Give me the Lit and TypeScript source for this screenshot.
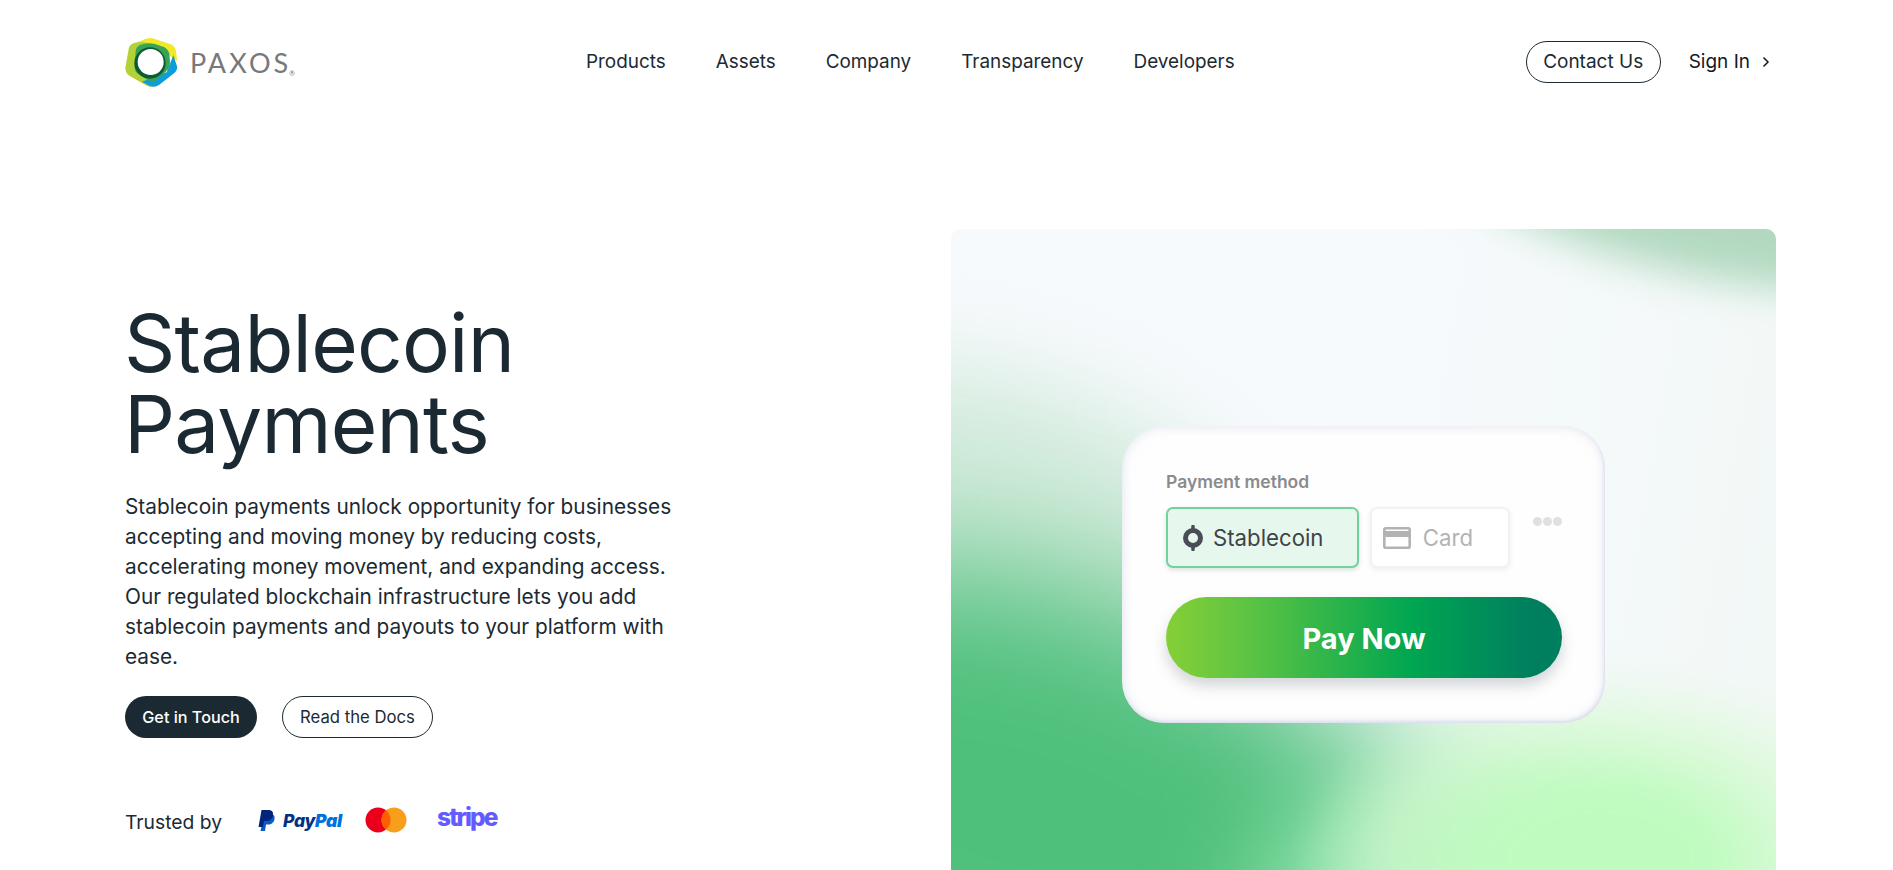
import { LitElement, css, html } from 'lit'
import { customElement } from 'lit/decorators.js'

const navLinks = ['Products', 'Assets', 'Company', 'Transparency', 'Developers']

@customElement('app-root')
export class AppRoot extends LitElement {
  static styles = css`
    :host {
      display: block;
      height: 870px;
      overflow: hidden;
      background: #fff;
      color: #1b2a32;
      font-family: Inter, 'Liberation Sans', sans-serif;
    }
    .nav {
      display: flex;
      align-items: center;
      height: 123px;
      padding: 0 123px 0 125px;
    }
    .logo {
      display: flex;
      align-items: center;
      width: 461px;
      flex: none;
    }
    .logo-mark {
      width: 52px;
      height: 50px;
      flex: none;
    }
    .wordmark {
      margin-left: 13px;
      font-family: Lato, sans-serif;
      font-size: 27px;
      font-weight: 400;
      letter-spacing: 3px;
      color: #77787b;
      line-height: 1;
      padding-top: 3px;
    }
    .wordmark sup {
      font-size: 7px;
      letter-spacing: 0;
      margin-left: -2px;
      vertical-align: -3px;
    }
    .links {
      display: flex;
      gap: 50px;
      font-size: 18.900px;
    }
    .right {
      margin-left: auto;
      display: flex;
      align-items: center;
      font-size: 19px;
    }
    .contact {
      height: 42px;
      width: 135px;
      box-sizing: border-box;
      border: 1px solid #1b2a32;
      border-radius: 21px;
      display: flex;
      align-items: center;
      justify-content: center;
    }
    .signin {
      margin-left: 28px;
      display: flex;
      align-items: center;
      gap: 12px;
      color: #15181b;
    }
    .hero {
      display: flex;
      align-items: flex-start;
      padding: 106px 117px 0 125px;
      height: 641px;
    }
    .copy {
      width: 826px;
      flex: none;
      padding-top: 73px;
    }
    h1 {
      margin: 0 0 0 -1px;
      font-size: 80px;
      line-height: 81px;
      font-weight: 400;
      letter-spacing: -0.8px;
    }
    .lead {
      margin: 28px 0 0;
      width: 565px;
      font-size: 20.800px;
      line-height: 30px;
      color: #1b2a32;
    }
    .actions {
      display: flex;
      gap: 25px;
      margin-top: 24px;
    }
    .btn {
      height: 42px;
      box-sizing: border-box;
      border-radius: 21px;
      display: flex;
      align-items: center;
      justify-content: center;
    }
    .btn.solid {
      width: 132px;
      background: #1b2a32;
      color: #fff;
      font-size: 16.200px;
      font-weight: 500;
    }
    .btn.ghost {
      width: 151px;
      border: 1px solid #1b2a32;
      font-size: 16.700px;
    }
    .trusted {
      display: flex;
      align-items: center;
      margin-top: 64px;
      height: 34px;
      font-size: 19.300px;
    }
    .trusted > span:first-child {
      width: 133px;
      padding-top: 5px;
    }
    .paypal {
      display: flex;
      align-items: center;
      gap: 8px;
      width: 107px;
      flex: none;
      margin-top: 3px;
    }
    .paypal svg {
      width: 17px;
      height: 21px;
    }
    .paypal span {
      font-size: 17.500px;
      font-weight: 800;
      font-style: italic;
      letter-spacing: -0.3px;
      color: #003087;
    }
    .paypal b {
      color: #0070e0;
    }
    .mc {
      width: 42px;
      height: 26px;
      flex: none;
      margin-top: 1px;
    }
    .stripe {
      margin-left: 30px;
      font-size: 24.500px;
      font-weight: 800;
      letter-spacing: -1.900px;
      color: #635bff;
      margin-top: -4px;
    }
    .visual {
      position: relative;
      width: 825px;
      height: 680px;
      flex: none;
      box-sizing: border-box;
      padding-top: 197px;
      display: flex;
      justify-content: center;
      align-items: flex-start;
      border-radius: 10px;
      overflow: hidden;
      background: linear-gradient(100deg, #f7fafd 40%, #f2f8f6 100%);
    }
    .blob {
      position: absolute;
      border-radius: 50%;
    }
    .blob.green {
      left: -360px;
      top: 350px;
      width: 860px;
      height: 460px;
      background: #4fc07c;
      filter: blur(70px);
      transform: rotate(16deg);
    }
    .blob.haze {
      left: -170px;
      top: 165px;
      width: 520px;
      height: 270px;
      background: #d3ebdc;
      filter: blur(50px);
      transform: rotate(25deg);
    }
    .blob.sage {
      left: 500px;
      top: -82px;
      width: 470px;
      height: 125px;
      background: #b2d9c0;
      filter: blur(20px);
      transform: rotate(13deg);
    }
    .blob.mint {
      left: 300px;
      top: 545px;
      width: 400px;
      height: 260px;
      background: #8fe2ab;
      filter: blur(50px);
    }
    .blob.lime {
      left: 340px;
      top: 440px;
      width: 620px;
      height: 380px;
      background: radial-gradient(closest-side, #bffbbf 35%, rgba(215, 250, 210, 0.7) 70%, rgba(225, 250, 225, 0) 100%);
      filter: blur(15px);
    }
    .pay-card {
      position: relative;
      width: 483px;
      height: 297px;
      box-sizing: border-box;
      padding: 45px 43px 0 44px;
      border-radius: 42px;
      background: #fefefe;
      box-shadow: inset 0 0 12px rgba(200, 205, 228, 0.55), inset -1px -2px 3px rgba(200, 205, 228, 0.5);
    }
    .label {
      font-size: 17.500px;
      line-height: 22px;
      font-weight: 600;
      color: #8a8b8d;
    }
    .methods {
      display: flex;
      margin-top: 14px;
    }
    .method {
      height: 61px;
      box-sizing: border-box;
      border-radius: 7px;
      display: flex;
      align-items: center;
      font-size: 22.200px;
    }
    .method.on {
      width: 194px;
      padding-left: 15px;
      gap: 10px;
      background: #e6f8ee;
      border: 2px solid #72d29c;
      color: #3f4347;
      box-shadow: 0 2px 5px rgba(60, 90, 80, 0.18);
    }
    .method.off {
      width: 141px;
      margin-left: 11px;
      padding-left: 11px;
      gap: 12px;
      background: #fff;
      border: 2px solid #f1f2f3;
      color: #b2b3b5;
      box-shadow: 0 2px 5px rgba(60, 70, 80, 0.08);
    }
    .dots {
      display: flex;
      gap: 1px;
      margin: 10px 0 0 23px;
    }
    .dots i {
      width: 9px;
      height: 9px;
      border-radius: 50%;
      background: #dfe0e2;
    }
    .pay {
      margin-top: 29px;
      height: 81px;
      border-radius: 41px;
      box-sizing: border-box;
      padding-top: 1px;
      display: flex;
      align-items: center;
      justify-content: center;
      font-size: 29px;
      font-weight: 700;
      color: #fff;
      background: linear-gradient(90deg, #85cf36 0%, #5ac344 22%, #00a651 62%, #007f5f 92%);
      box-shadow: 0 8px 14px rgba(60, 70, 80, 0.22);
    }
  `

  renderLogo() {
    return html`<svg class="logo-mark" viewBox="15 12 156 150">
      <path d="M40 31 Q80 18 105 30 L125 110 L98 160 Q88 163 78 157 L28 128 Q16 120 16 105 L26 48 Q28 36 40 31Z" fill="#b3d235"/>
      <path d="M62 24 Q85 10 105 18 L152 34 Q166 40 168 55 L172 85 L110 40Z" fill="#f2e82a"/>
      <path d="M160 66 L171 100 Q173 112 163 120 L118 155 Q104 165 88 158 L66 146 L140 118Z" fill="#0d9ddb"/>
      <path d="M60 36 Q80 28 105 33 L132 42 Q144 48 148 62 L150 85 Q150 106 136 118 L110 140 Q98 148 84 142 L56 124 Q42 114 44 98 L47 55 Q48 42 60 36Z" fill="#36a454"/>
      <circle cx="90" cy="90" r="47" fill="#0c5a36"/>
      <circle cx="92" cy="87" r="39" fill="#fff"/>
    </svg>`
  }

  render() {
    return html`
      <header class="nav">
        <div class="logo">
          ${this.renderLogo()}
          <span class="wordmark">PAXOS<sup>®</sup></span>
        </div>
        <nav class="links">${navLinks.map((l) => html`<span>${l}</span>`)}</nav>
        <div class="right">
          <span class="contact">Contact Us</span>
          <span class="signin">Sign In
            <svg width="8" height="12" viewBox="0 0 8 12" fill="none" stroke="#15181b" stroke-width="1.5"><path d="M1.5 1.5 6 6l-4.500 4.500"/></svg>
          </span>
        </div>
      </header>
      <main class="hero">
        <section class="copy">
          <h1>Stablecoin<br />Payments</h1>
          <p class="lead">Stablecoin payments unlock opportunity for businesses accepting and moving money by reducing costs, accelerating money movement, and expanding access. Our regulated blockchain infrastructure lets you add stablecoin payments and payouts to your platform with ease.</p>
          <div class="actions">
            <span class="btn solid">Get in Touch</span>
            <span class="btn ghost">Read the Docs</span>
          </div>
          <div class="trusted">
            <span>Trusted by</span>
            <span class="paypal">
              <svg viewBox="0 0 17 21">
                <path d="M6 4h6c3.500 0 5 1.800 4.500 5C16 12.500 13.500 14.500 10 14.500H8L7 21H2.500z" fill="#0b5bc4"/>
                <path d="M3.500 0h6.500c3.800 0 5.500 1.800 5 5C14.500 9 12 11 8.500 11H6L5 17H0.500z" fill="#00257a"/>
              </svg>
              <span>Pay<b>Pal</b></span>
            </span>
            <svg class="mc" viewBox="0 0 42 26">
              <circle cx="13" cy="13" r="12.500" fill="#eb001b"/>
              <circle cx="29" cy="13" r="12.500" fill="#f79e1b"/>
              <path d="M21 3.300a12.500 12.500 0 0 1 0 19.400a12.500 12.500 0 0 1 0-19.400z" fill="#ff5f00"/>
            </svg>
            <span class="stripe">stripe</span>
          </div>
        </section>
        <section class="visual">
          <div class="blob haze"></div>
          <div class="blob green"></div>
          <div class="blob mint"></div>
          <div class="blob lime"></div>
          <div class="blob sage"></div>
          <div class="pay-card">
            <div class="label">Payment method</div>
            <div class="methods">
              <div class="method on">
                <svg width="20" height="26" viewBox="0 0 20 26" fill="none" stroke="#4a4d55"><circle cx="10" cy="13" r="7.500" stroke-width="5"/><path d="M10 1.500v3M10 21.500v3" stroke-width="3.500" stroke-linecap="round"/></svg>
                Stablecoin
              </div>
              <div class="method off">
                <svg width="28" height="22" viewBox="0 0 28 22"><rect x="1.300" y="1.300" width="25.400" height="19.400" rx="1.500" fill="none" stroke="#b2b3b5" stroke-width="2.600"/><rect x="1" y="4" width="26" height="6" fill="#b2b3b5"/></svg>
                Card
              </div>
              <div class="dots"><i></i><i></i><i></i></div>
            </div>
            <div class="pay">Pay Now</div>
          </div>
        </section>
      </main>
    `
  }
}
